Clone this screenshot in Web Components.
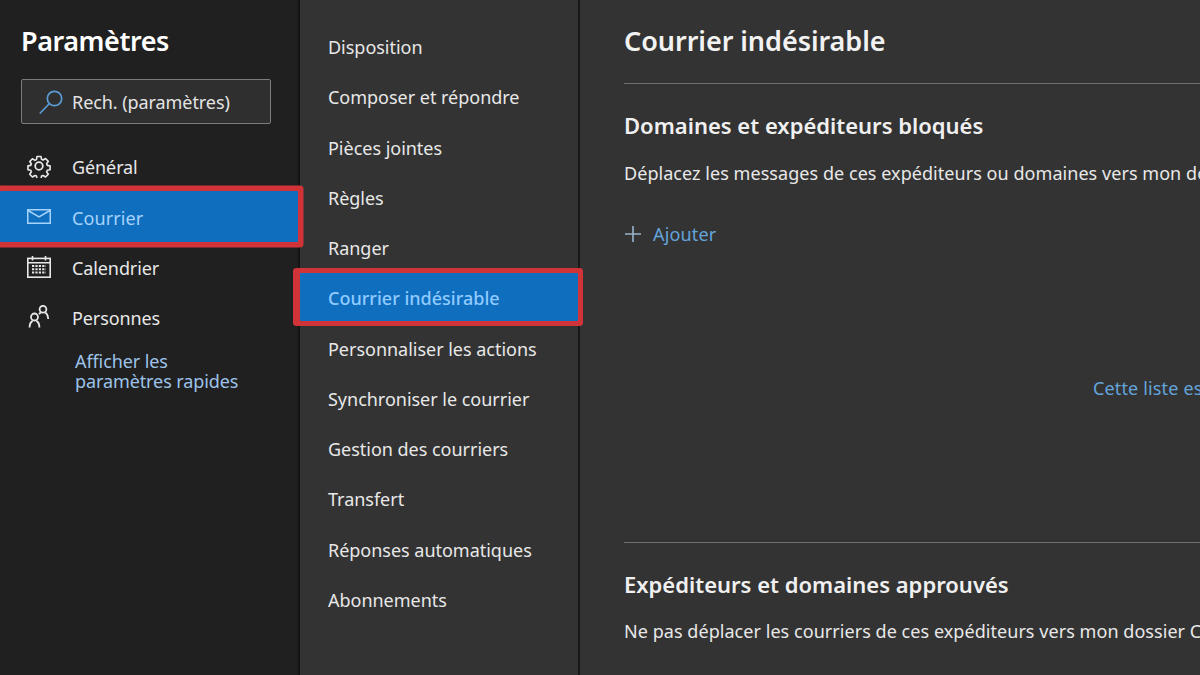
<!DOCTYPE html>
<html lang="fr">
<head>
<meta charset="utf-8">
<title>Paramètres</title>
<style>
    html, body { margin: 0; height: 100%; overflow: hidden; background: #333; }
    body { font-family: "Noto Sans", "Open Sans", sans-serif; }
</style>
</head>
<body>
<settings-app>
    <settings-sidebar slot="sidebar">
        <nav-item icon="gear">Général</nav-item>
        <nav-item icon="mail" selected>Courrier</nav-item>
        <nav-item icon="calendar">Calendrier</nav-item>
        <nav-item icon="people">Personnes</nav-item>
    </settings-sidebar>
    <settings-menu slot="menu">
        <menu-item>Disposition</menu-item>
        <menu-item>Composer et répondre</menu-item>
        <menu-item>Pièces jointes</menu-item>
        <menu-item>Règles</menu-item>
        <menu-item>Ranger</menu-item>
        <menu-item selected>Courrier indésirable</menu-item>
        <menu-item>Personnaliser les actions</menu-item>
        <menu-item>Synchroniser le courrier</menu-item>
        <menu-item>Gestion des courriers</menu-item>
        <menu-item>Transfert</menu-item>
        <menu-item>Réponses automatiques</menu-item>
        <menu-item>Abonnements</menu-item>
    </settings-menu>
    <junk-panel slot="content"></junk-panel>
</settings-app>

<script>
class SettingsApp extends HTMLElement {
    constructor() {
        super();
        this.attachShadow({mode: "open"}).innerHTML = `
        <style>
            :host {
                display: grid;
                grid-template-columns: 298px 2px 278px 2px 1fr;
                width: 1200px;
                height: 675px;
                overflow: hidden;
            }
            .line { background: #141414; }
            .line.light { background: #181818; }
        </style>
        <slot name="sidebar"></slot>
        <div class="line"></div>
        <slot name="menu"></slot>
        <div class="line light"></div>
        <slot name="content"></slot>`;
    }
}

class SettingsSidebar extends HTMLElement {
    constructor() {
        super();
        this.attachShadow({mode: "open"}).innerHTML = `
        <style>
            :host {
                display: block;
                background: #202020;
                padding-top: 23px;
            }
            h1 {
                margin: 0 0 0 21px;
                font: 600 27px/36px "Noto Sans", sans-serif;
                letter-spacing: -0.45px;
                color: #fff;
            }
            .search {
                display: flex;
                align-items: center;
                box-sizing: border-box;
                width: 250px;
                height: 45px;
                margin: 20px 0 17px 21px;
                padding-left: 17px;
                gap: 9px;
                background: #2f2f2f;
                border: 1px solid #7c7c7c;
                border-radius: 2px;
                font-size: 18px;
                letter-spacing: -0.07px;
                color: #e4e4e4;
            }
            .links {
                margin: 8px 0 0 75px;
                font-size: 18px;
                line-height: 20px;
                letter-spacing: -0.1px;
                color: #9dc3ea;
            }
        </style>
        <h1>Paramètres</h1>
        <div class="search">
            <svg width="24" height="26" viewBox="0 0 24 26" fill="none" stroke="#5b9bd5" stroke-width="1.7">
                <circle cx="15.5" cy="9.5" r="7.2"/>
                <path d="M10 15 L0.8 24.5"/>
            </svg>
            <span>Rech. (paramètres)</span>
        </div>
        <slot></slot>
        <div class="links">Afficher les<br>paramètres rapides</div>`;
    }
}

const ICONS = {
    gear: `<svg width="24" height="24" viewBox="0 0 24 24" fill="none" stroke="currentColor" stroke-width="1.8" stroke-linejoin="round">
        <circle cx="12" cy="12" r="3.8"/>
        <path d="M9.8 1.4h4.4l.6 3.2 1.7.8 2.8-1.7 3 3.1-1.8 2.7.7 1.8 3.1.6v4.2l-3.1.6-.7 1.7 1.8 2.8-3 3-2.8-1.7-1.7.7-.6 3.2H9.8l-.6-3.2-1.7-.7-2.8 1.7-3-3 1.8-2.8-.7-1.7-3.1-.6v-4.2l3.1-.6.7-1.8L1.7 7.1l3-3.1 2.8 1.7 1.7-.8z" transform="translate(1.2 1.2) scale(.9)"/>
    </svg>`,
    mail: `<svg width="24" height="15" viewBox="0 0 24 15" fill="none" stroke="currentColor" stroke-width="1.5">
        <rect x="0.75" y="0.75" width="22.5" height="13.5"/>
        <path d="M1 1.5 L12 8 L23 1.5"/>
    </svg>`,
    calendar: `<svg width="24" height="22" viewBox="0 0 24 22" fill="none" stroke="currentColor" stroke-width="1.6">
        <rect x="0.8" y="2.4" width="22.4" height="18.8"/>
        <path d="M0.8 6.8H23.2M5.5 0V4.5M18.5 0V4.5"/>
        <path d="M5 10h14M5 13.2h14M5 16.4h14" stroke-width="2" stroke-dasharray="2.2 1.2"/>
    </svg>`,
    people: `<svg width="24" height="24" viewBox="0 0 24 24" fill="none" stroke="currentColor" stroke-width="1.8">
        <circle cx="7.5" cy="12" r="3.5"/>
        <path d="M2.6 22.5c0-3.4 1.3-5.6 3-6.6M12.4 22.5c0-3.4-1.3-5.6-3-6.6"/>
        <circle cx="16" cy="4.2" r="3.4"/>
        <path d="M13.8 7.6c-.8.5-1.3 1-1.8 1.7M18.2 7.6c1.8 1 2.8 3 3 6.4"/>
    </svg>`
};

class NavItem extends HTMLElement {
    constructor() {
        super();
        this.attachShadow({mode: "open"}).innerHTML = `
        <style>
            :host {
                display: flex;
                align-items: center;
                box-sizing: border-box;
                height: 50.4px;
                padding: 2px 0 0 27px;
                font-size: 18px;
                letter-spacing: -0.1px;
                color: #e8e8e8;
            }
            :host([selected]) {
                background: #106ebe;
                color: #a5d3fb;
                letter-spacing: 0.1px;
                box-shadow: 0 0 0 5.5px #d13438;
                border-radius: 1px;
                position: relative;
            }
            .icon {
                display: flex;
                width: 24px;
                justify-content: center;
                margin-top: -2px;
                margin-right: 21px;
            }
        </style>
        <span class="icon"></span>
        <slot></slot>`;
    }
    connectedCallback() {
        this.shadowRoot.querySelector(".icon").innerHTML = ICONS[this.getAttribute("icon")] || "";
    }
}

class SettingsMenu extends HTMLElement {
    constructor() {
        super();
        this.attachShadow({mode: "open"}).innerHTML = `
        <style>
            :host {
                display: block;
                background: #333;
                padding-top: 22px;
            }
        </style>
        <slot></slot>`;
    }
}

class MenuItem extends HTMLElement {
    constructor() {
        super();
        this.attachShadow({mode: "open"}).innerHTML = `
        <style>
            :host {
                display: flex;
                align-items: center;
                height: 50.25px;
                padding-left: 28px;
                font-size: 18px;
                letter-spacing: -0.02px;
                color: #e8e8e8;
            }
            :host([selected]) {
                box-sizing: border-box;
                background: #106ebe;
                color: #8fcbff;
                font-weight: 500;
                letter-spacing: 0;
                box-shadow: 0 0 0 5px #d13438, -2px 0 0 5px #d13438;
                position: relative;
                height: 48px;
                padding-top: 2px;
                margin-bottom: 2.25px;
                border-radius: 1px;
            }
        </style>
        <slot></slot>`;
    }
}

class JunkPanel extends HTMLElement {
    constructor() {
        super();
        this.attachShadow({mode: "open"}).innerHTML = `
        <style>
            :host {
                display: block;
                background: #333;
                padding: 22px 0 0 44px;
                overflow: hidden;
                white-space: nowrap;
                color: #e8e8e8;
            }
            h1 {
                margin: 0;
                font: 600 27px/38px "Noto Sans", sans-serif;
                letter-spacing: -0.05px;
                color: #f2f2f2;
            }
            hr {
                border: 0;
                height: 1px;
                background: #6e6e6e;
                margin: 0;
            }
            h2 {
                margin: 0;
                font: 600 22px/28px "Noto Sans", sans-serif;
                color: #f0f0f0;
            }
            p {
                margin: 0;
                font-size: 18px;
                line-height: 24px;
                letter-spacing: 0.05px;
            }
            .add {
                display: flex;
                align-items: center;
                gap: 11px;
                margin-top: 36px;
                height: 26px;
                font-size: 18px;
                letter-spacing: 0.15px;
                color: #63a4dc;
            }
            .empty {
                margin: 0 0 0 469px;
                font-size: 18px;
                line-height: 24px;
                letter-spacing: 0.15px;
                color: #63a4dc;
            }
        </style>
        <h1>Courrier indésirable</h1>
        <hr style="margin-top:23px">
        <h2 style="margin-top:27px">Domaines et expéditeurs bloqués</h2>
        <p style="margin-top:22px">Déplacez les messages de ces expéditeurs ou domaines vers mon dossier Courrier indésirable.</p>
        <div class="add">
            <svg width="18" height="18" viewBox="0 0 18 18" stroke="#9ab4cc" stroke-width="1.6"><path d="M9 1V17M1 9H17"/></svg>
            <span>Ajouter</span>
        </div>
        <div class="empty" style="margin-top:129px">Cette liste est vide.</div>
        <hr style="margin-top:142px">
        <h2 style="margin-top:27px">Expéditeurs et domaines approuvés</h2>
        <p style="margin-top:21px">Ne pas déplacer les courriers de ces expéditeurs vers mon dossier Courrier indésirable.</p>`;
    }
}

customElements.define("settings-app", SettingsApp);
customElements.define("settings-sidebar", SettingsSidebar);
customElements.define("nav-item", NavItem);
customElements.define("settings-menu", SettingsMenu);
customElements.define("menu-item", MenuItem);
customElements.define("junk-panel", JunkPanel);
</script>
</body>
</html>
